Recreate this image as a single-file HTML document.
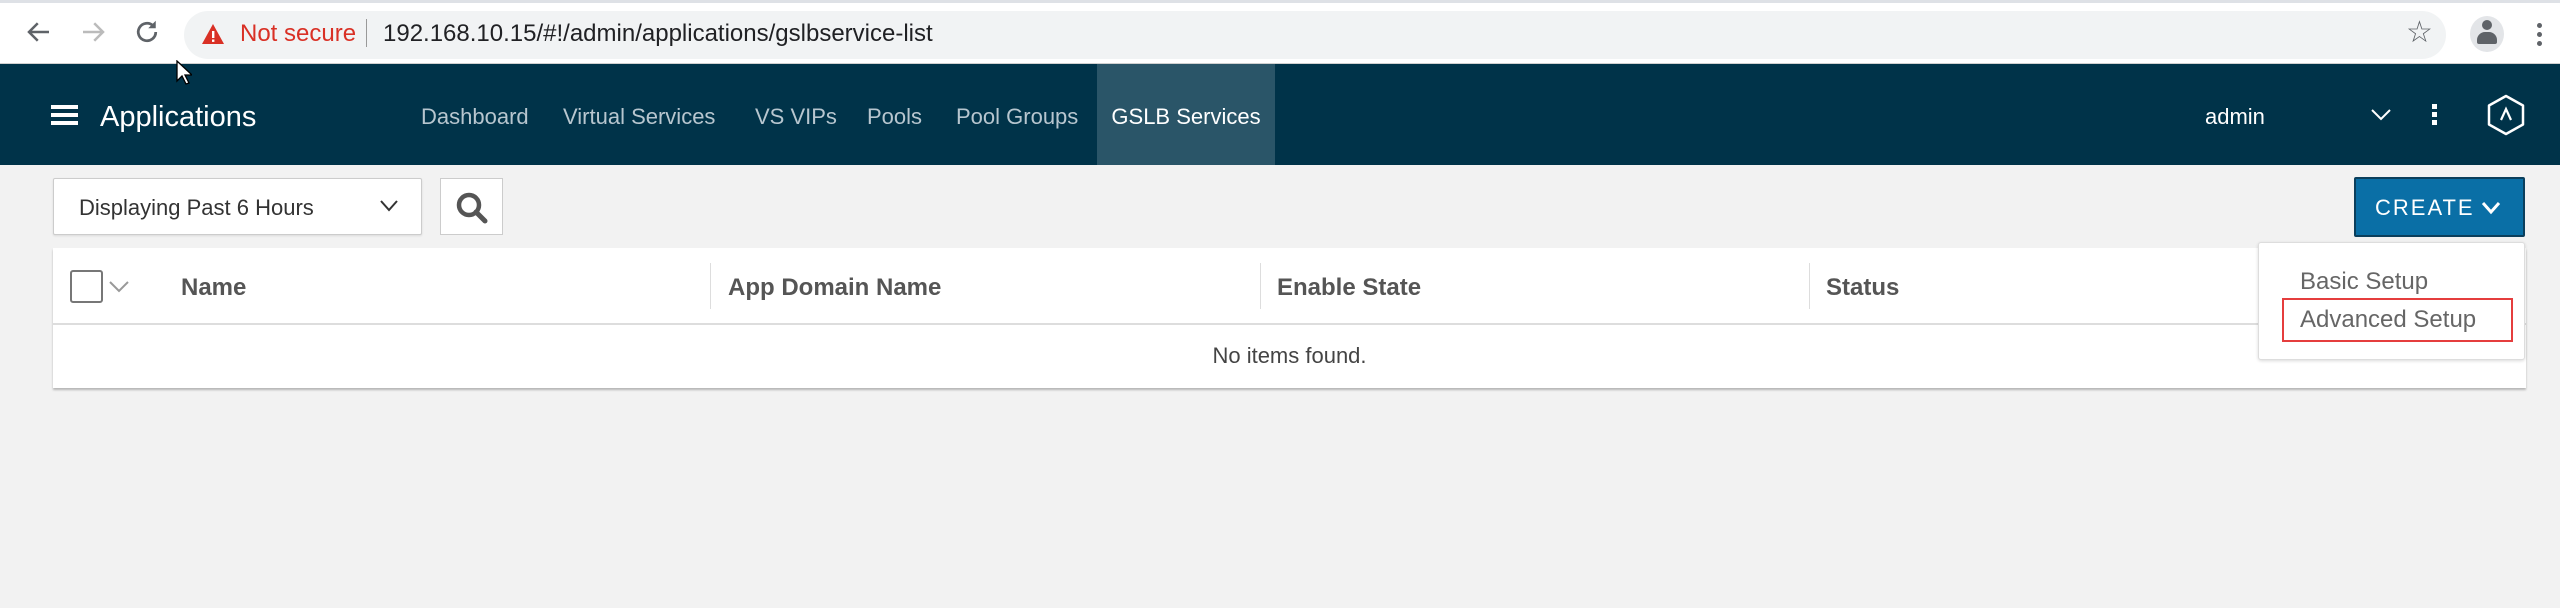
<!DOCTYPE html>
<html><head><meta charset="utf-8"><style>
*{margin:0;padding:0;box-sizing:border-box}
body{width:2560px;height:608px;background:#f2f2f2;font-family:"Liberation Sans",sans-serif;position:relative;overflow:hidden}
.a{position:absolute;white-space:nowrap}
#chrome{position:absolute;left:0;top:0;width:2560px;height:64px;background:#fff;border-top:3px solid #dee1e6;border-bottom:1px solid #d0d0d0}
#addr{position:absolute;left:184px;top:8px;width:2262px;height:48px;border-radius:24px;background:#f1f3f4}
#nav{position:absolute;left:0;top:64px;width:2560px;height:101px;background:#003349}
.ni{position:absolute;top:0;height:101px;line-height:106px;font-size:22px;color:#b7c6cf}
.th{position:absolute;top:272px;font-size:24px;font-weight:bold;color:#555;line-height:32px}
.sep{position:absolute;top:263px;width:1px;height:46px;background:#ddd}
</style></head><body>
<div id="chrome">
  <svg class="a" style="left:24px;top:14px" width="30" height="30" viewBox="0 0 24 24"><path d="M20 12H5M11 5l-7 7 7 7" fill="none" stroke="#5f6368" stroke-width="2"/></svg>
  <svg class="a" style="left:78px;top:14px" width="30" height="30" viewBox="0 0 24 24"><path d="M4 12h15M13 5l7 7-7 7" fill="none" stroke="#bbb" stroke-width="2"/></svg>
  <svg class="a" style="left:132px;top:14px" width="30" height="30" viewBox="0 0 24 24"><path d="M19 12a7 7 0 1 1-2.1-5" fill="none" stroke="#5f6368" stroke-width="2.2"/><path d="M19 3v6h-6z" fill="#5f6368"/></svg>
  <div id="addr"></div>
  <svg class="a" style="left:201px;top:20px" width="24" height="22" viewBox="0 0 24 22"><path d="M12 1L23 21H1z" fill="#d93025"/><rect x="11" y="8" width="2.4" height="7" fill="#fff"/><rect x="11" y="16.5" width="2.4" height="2.4" fill="#fff"/></svg>
  <div class="a" style="left:240px;top:15px;font-size:24px;color:#d93025;line-height:32px">Not secure</div>
  <div class="a" style="left:366px;top:16px;width:1px;height:28px;background:#999"></div>
  <div class="a" style="left:383px;top:15px;font-size:24px;color:#202124;line-height:32px">192.168.10.15/#!/admin/applications/gslbservice-list</div>
  <div class="a" style="left:2406px;top:12px;font-size:30px;color:#5f6368">☆</div>
  <div class="a" style="left:2470px;top:13px;width:34px;height:36px;border-radius:50%;background:#e3e5e8"></div>
  <div class="a" style="left:2482px;top:17px;width:10px;height:10px;border-radius:50%;background:#5f6368"></div>
  <div class="a" style="left:2477px;top:29px;width:20px;height:12px;border-radius:8px 8px 2px 2px;background:#5f6368"></div>
  <div class="a" style="left:2537px;top:20px;width:5px;height:5px;border-radius:50%;background:#5f6368;box-shadow:0 9px 0 #5f6368,0 18px 0 #5f6368"></div>
</div>
<div id="nav">
  <div class="a" style="left:51px;top:41px;width:27px;height:4px;background:#fff;box-shadow:0 8px 0 #fff,0 16px 0 #fff"></div>
  <div class="a" style="left:100px;top:0;line-height:106px;font-size:29px;color:#fff">Applications</div>
  <div class="ni" style="left:421px">Dashboard</div>
  <div class="ni" style="left:563px">Virtual Services</div>
  <div class="ni" style="left:755px">VS VIPs</div>
  <div class="ni" style="left:867px">Pools</div>
  <div class="ni" style="left:956px">Pool Groups</div>
  <div class="ni" style="left:1097px;width:178px;background:#2a5568;color:#fff;text-align:center">GSLB Services</div>
  <div class="a" style="left:2205px;top:0;line-height:106px;font-size:22px;color:#fff">admin</div>
  <svg class="a" style="left:2370px;top:44px" width="22" height="14" viewBox="0 0 22 14"><path d="M2 2l9 9 9-9" fill="none" stroke="#fff" stroke-width="2"/></svg>
  <div class="a" style="left:2432px;top:40px;width:5px;height:5px;background:#fff;box-shadow:0 8px 0 #fff,0 16px 0 #fff"></div>
  <svg class="a" style="left:2486px;top:30px" width="40" height="42" viewBox="0 0 40 42"><path d="M20 2L37 11.5V30.5L20 40 3 30.5V11.5z" fill="none" stroke="#fff" stroke-width="2.5" stroke-linejoin="round"/><path d="M15 26l5-11 5 11" fill="none" stroke="#fff" stroke-width="2.2"/></svg>
</div>
<div class="a" style="left:53px;top:178px;width:369px;height:57px;background:#fff;border:1px solid #ccc;border-radius:2px;box-shadow:0 1px 2px rgba(0,0,0,.1)"></div>
<div class="a" style="left:79px;top:192px;font-size:22px;color:#333;line-height:32px">Displaying Past 6 Hours</div>
<svg class="a" style="left:379px;top:199px" width="20" height="14" viewBox="0 0 20 14"><path d="M2 2l8 9 8-9" fill="none" stroke="#333" stroke-width="2"/></svg>
<div class="a" style="left:440px;top:178px;width:63px;height:57px;background:#fff;border:1px solid #ccc"></div>
<svg class="a" style="left:455px;top:191px" width="34" height="34" viewBox="0 0 34 34"><circle cx="14" cy="14" r="10" fill="none" stroke="#555" stroke-width="4.5"/><path d="M21 21l9 9" stroke="#555" stroke-width="5" stroke-linecap="round"/></svg>
<div class="a" style="left:53px;top:248px;width:2473px;height:140px;background:#fff;box-shadow:0 2px 2px rgba(0,0,0,.25)"></div>
<div class="a" style="left:53px;top:323px;width:2473px;height:2px;background:#ddd"></div>
<div class="a" style="left:70px;top:270px;width:33px;height:33px;border:2px solid #777;border-radius:3px"></div>
<svg class="a" style="left:108px;top:280px" width="22" height="14" viewBox="0 0 22 14"><path d="M2 2l9 9 9-9" fill="none" stroke="#999" stroke-width="2"/></svg>
<div class="th" style="left:181px">Name</div>
<div class="sep" style="left:710px"></div>
<div class="th" style="left:728px">App Domain Name</div>
<div class="sep" style="left:1260px"></div>
<div class="th" style="left:1277px">Enable State</div>
<div class="sep" style="left:1809px"></div>
<div class="th" style="left:1826px">Status</div>
<div class="a" style="left:53px;top:340px;width:2473px;text-align:center;font-size:22px;color:#444;line-height:32px">No items found.</div>
<div class="a" style="left:2354px;top:177px;width:171px;height:60px;background:#0a6fa6;border:2px solid #0b3f5c;border-radius:2px"></div>
<div class="a" style="left:2375px;top:192px;font-size:22px;letter-spacing:2px;color:#fff;line-height:32px">CREATE</div>
<svg class="a" style="left:2481px;top:201px" width="20" height="14" viewBox="0 0 20 14"><path d="M2 2l8 9 8-9" fill="none" stroke="#fff" stroke-width="3"/></svg>
<div class="a" style="left:2258px;top:242px;width:267px;height:118px;background:#fff;border:1px solid #ddd;border-radius:3px;box-shadow:0 1px 3px rgba(0,0,0,.15)"></div>
<div class="a" style="left:2300px;top:266px;font-size:24px;color:#666;line-height:32px">Basic Setup</div>
<div class="a" style="left:2282px;top:298px;width:231px;height:44px;border:2px solid #e53e3e"></div>
<div class="a" style="left:2300px;top:304px;font-size:24px;color:#666;line-height:32px">Advanced Setup</div>
<svg class="a" style="left:176px;top:60px" width="16" height="26" viewBox="0 0 16 26"><path d="M1 1v20l5-5 4 8 3-1-4-8h7z" fill="#fff" stroke="#000" stroke-width="1.3"/></svg>
</body></html>
